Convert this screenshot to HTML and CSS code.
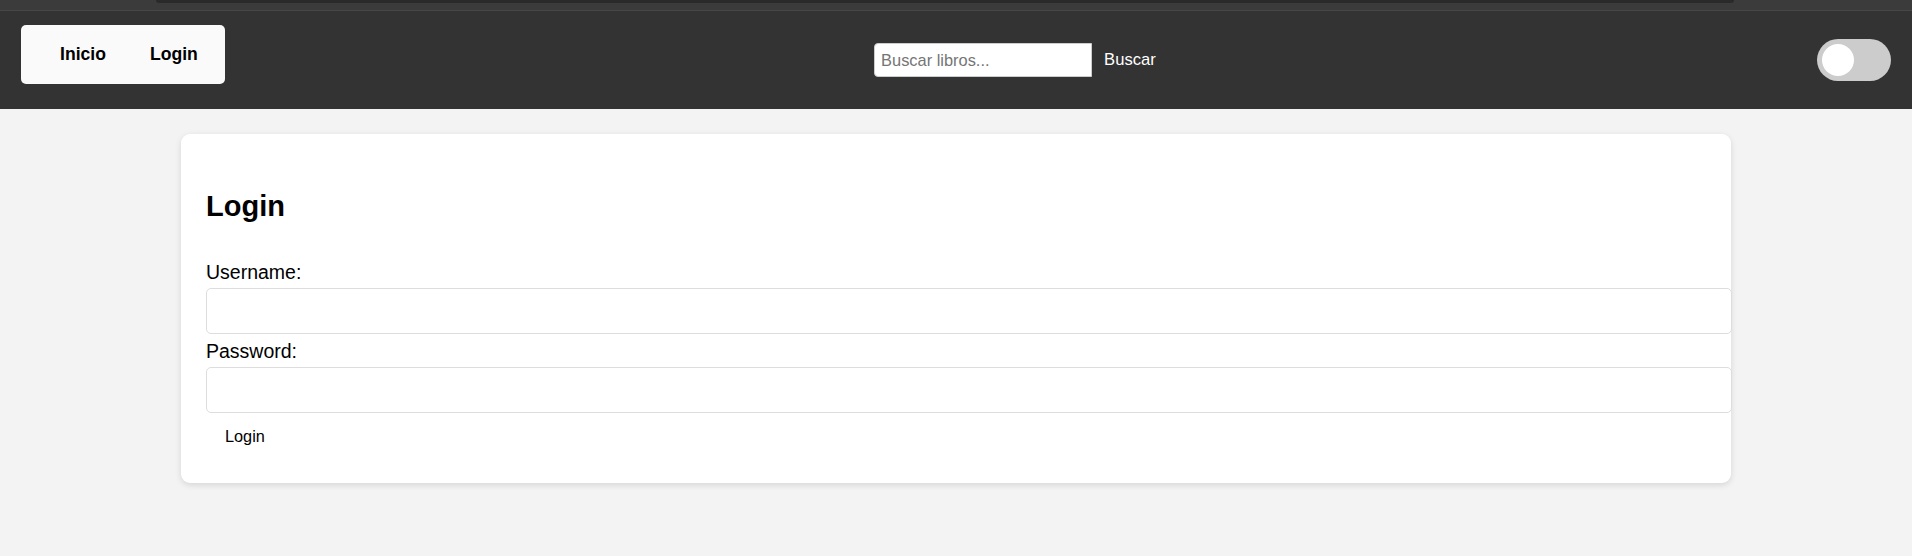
FILE: index.html
```html
<!DOCTYPE html>
<html lang="es">
<head>
<meta charset="utf-8">
<title>Login</title>
<link rel="stylesheet" href="styles.css">
</head>
<body>
<div class="top-strip"><div class="top-strip-bar"></div></div>
<header class="site-header">
  <nav class="main-nav">
    <a href="#" class="nav-link">Inicio</a>
    <a href="#" class="nav-link">Login</a>
  </nav>
  <form class="search-form">
    <input type="text" class="search-input" placeholder="Buscar libros...">
    <button type="button" class="search-button">Buscar</button>
  </form>
  <label class="theme-toggle">
    <span class="toggle-knob"></span>
  </label>
</header>
<main class="content">
  <section class="card">
    <h2 class="card-title">Login</h2>
    <form class="login-form">
      <label class="field-label" for="username">Username:</label>
      <input class="field-input" id="username" type="text">
      <label class="field-label" for="password">Password:</label>
      <input class="field-input" id="password" type="password">
      <button type="button" class="login-button">Login</button>
    </form>
  </section>
</main>
</body>
</html>
```
FILE: styles.css
```css
* {
  font-family: "Liberation Sans", Arial, sans-serif;
}

body {
  margin: 0;
  background: #f3f3f3;
  color: #000;
}

.top-strip {
  height: 10px;
  background: #3b3b3b;
  border-bottom: 1px solid #474747;
  padding: 0 178px 0 156px;
}

.top-strip-bar {
  height: 3px;
  background: #2a2a2a;
  border-radius: 0 0 8px 8px;
}

.site-header {
  height: 98px;
  background: #333333;
  display: flex;
  align-items: center;
  justify-content: space-between;
  padding: 0 21px;
}

.main-nav {
  display: flex;
  align-items: center;
  gap: 44px;
  height: 59px;
  padding: 0 27px 0 39px;
  background: #fafafa;
  border-radius: 5px;
  margin-bottom: 11px;
  box-sizing: border-box;
}

.nav-link {
  font-size: 17.6px;
  font-weight: bold;
  color: #000;
  text-decoration: none;
}

.search-form {
  display: flex;
  align-items: center;
}

.search-input {
  width: 218px;
  height: 34px;
  box-sizing: border-box;
  border: 1px solid #cccccc;
  border-radius: 4px 0 0 4px;
  padding: 0 6px;
  font-size: 16.4px;
  color: #000;
  background: #fff;
  outline: none;
}

.search-input::placeholder {
  color: #757575;
}

.search-button {
  background: transparent;
  border: none;
  color: #fff;
  font-size: 16.6px;
  padding: 8px 12px;
}

.theme-toggle {
  display: flex;
  align-items: center;
  width: 74px;
  height: 42px;
  background: #cccccc;
  border-radius: 21px;
  padding: 0 5px;
  box-sizing: border-box;
}

.toggle-knob {
  width: 32px;
  height: 32px;
  border-radius: 50%;
  background: #ffffff;
}

.content {
  padding: 25px 0;
  display: flex;
  justify-content: center;
}

.card {
  width: 1550px;
  box-sizing: border-box;
  background: #fff;
  border-radius: 9px;
  box-shadow: 0 2px 6px rgba(0, 0, 0, 0.12);
  padding: 56px 25px 30px;
}

.card-title {
  margin: 0 0 38px;
  font-size: 29px;
  font-weight: bold;
}

.login-form {
  display: flex;
  flex-direction: column;
  align-items: flex-start;
}

.field-label {
  display: block;
  font-size: 19.5px;
  margin-bottom: 4px;
}

.field-input {
  box-sizing: content-box;
  width: 100%;
  height: 44px;
  padding: 0 12px;
  border: 1px solid #dddddd;
  border-radius: 5px;
  margin: 0 0 6px;
  font-size: 16px;
  background: #fff;
}

.login-button {
  background: transparent;
  border: none;
  padding: 8px 19px 7px;
  font-size: 16.3px;
  color: #000;
}
```
